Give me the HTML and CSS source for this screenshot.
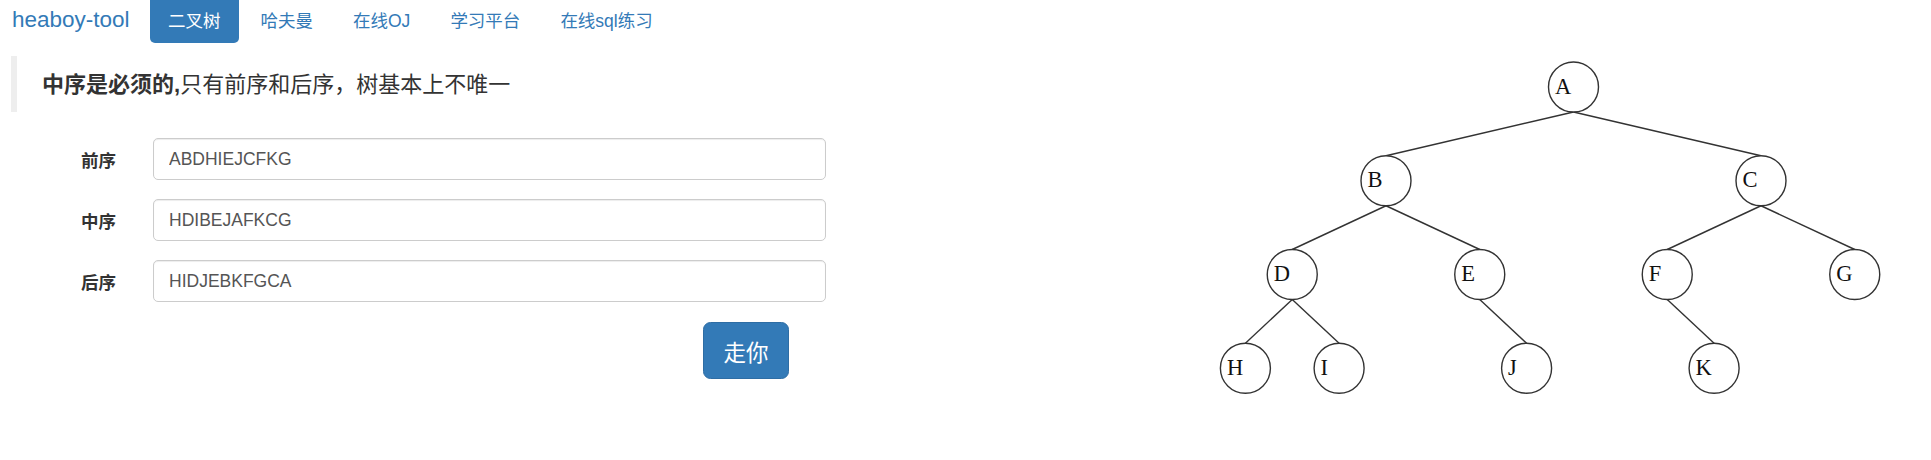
FILE: index.html
```html
<!DOCTYPE html>
<html lang="zh-CN">
<head>
<meta charset="utf-8">
<title>heaboy-tool</title>
<link rel="stylesheet" href="styles.css">
</head>
<body>
<nav class="navbar">
  <a class="brand" href="#">heaboy-tool</a>
  <ul class="pills">
    <li class="pill active"><a href="#">二叉树</a></li>
    <li class="pill"><a href="#">哈夫曼</a></li>
    <li class="pill"><a href="#">在线OJ</a></li>
    <li class="pill"><a href="#">学习平台</a></li>
    <li class="pill"><a href="#">在线sql练习</a></li>
  </ul>
</nav>
<main class="content">
  <section class="left">
    <blockquote class="note"><strong>中序是必须的,</strong>只有前序和后序，树基本上不唯一</blockquote>
    <form class="form">
      <div class="row"><label class="label">前序</label><input class="input" type="text" value="ABDHIEJCFKG"></div>
      <div class="row"><label class="label">中序</label><input class="input" type="text" value="HDIBEJAFKCG"></div>
      <div class="row"><label class="label">后序</label><input class="input" type="text" value="HIDJEBKFGCA"></div>
      <div class="actions"><button class="btn" type="button">走你</button></div>
    </form>
  </section>
  <section class="right">
    <svg class="tree" width="966" height="417" viewBox="965 43 966 417" xmlns="http://www.w3.org/2000/svg">
      <g class="edges">
        <line x1="1573.5" y1="112" x2="1386" y2="155.75"/>
        <line x1="1573.5" y1="112" x2="1761" y2="155.75"/>
        <line x1="1386" y1="205.75" x2="1292.25" y2="249.5"/>
        <line x1="1386" y1="205.75" x2="1479.75" y2="249.5"/>
        <line x1="1761" y1="205.75" x2="1667.25" y2="249.5"/>
        <line x1="1761" y1="205.75" x2="1854.75" y2="249.5"/>
        <line x1="1292.25" y1="299.5" x2="1245.4" y2="343.25"/>
        <line x1="1292.25" y1="299.5" x2="1339.1" y2="343.25"/>
        <line x1="1479.75" y1="299.5" x2="1526.6" y2="343.25"/>
        <line x1="1667.25" y1="299.5" x2="1714.1" y2="343.25"/>
      </g>
      <g class="nodes">
        <circle cx="1573.5" cy="87" r="25"/>
        <circle cx="1386" cy="180.75" r="25"/>
        <circle cx="1761" cy="180.75" r="25"/>
        <circle cx="1292.25" cy="274.5" r="25"/>
        <circle cx="1479.75" cy="274.5" r="25"/>
        <circle cx="1667.25" cy="274.5" r="25"/>
        <circle cx="1854.75" cy="274.5" r="25"/>
        <circle cx="1245.4" cy="368.25" r="25"/>
        <circle cx="1339.1" cy="368.25" r="25"/>
        <circle cx="1526.6" cy="368.25" r="25"/>
        <circle cx="1714.1" cy="368.25" r="25"/>
      </g>
      <g class="labels">
        <text x="1555" y="93.5">A</text>
        <text x="1367.5" y="187.25">B</text>
        <text x="1742.5" y="187.25">C</text>
        <text x="1273.75" y="281">D</text>
        <text x="1461.25" y="281">E</text>
        <text x="1648.75" y="281">F</text>
        <text x="1836.25" y="281">G</text>
        <text x="1226.9" y="374.75">H</text>
        <text x="1320.6" y="374.75">I</text>
        <text x="1508.1" y="374.75">J</text>
        <text x="1695.6" y="374.75">K</text>
      </g>
    </svg>
  </section>
</main>
</body>
</html>
```
FILE: styles.css
```css
html, body {
  margin: 0;
  padding: 0;
  background: #fff;
}
body {
  font-family: "Liberation Sans", "Noto Sans CJK SC", sans-serif;
  color: #333;
  font-size: 17.5px;
}
.navbar {
  display: flex;
  align-items: stretch;
  height: 43px;
}
.brand {
  box-sizing: border-box;
  width: 150px;
  padding: 0 0 0 12px;
  display: flex;
  align-items: center;
  padding-bottom: 3px;
  font-size: 22.5px;
  color: #337ab7;
  text-decoration: none;
}
.pills {
  display: flex;
  gap: 4px;
  list-style: none;
  margin: 0;
  padding: 0;
}
.pill a {
  display: flex;
  align-items: center;
  height: 43px;
  box-sizing: border-box;
  padding: 0 18px 4px;
  color: #337ab7;
  text-decoration: none;
  font-size: 17.5px;
}
.pill.active a {
  background: #337ab7;
  color: #fff;
  border-radius: 0 0 5px 5px;
}
.content {
  display: flex;
}
.left {
  width: 965px;
  flex: none;
}
.right {
  flex: 1;
}
.tree {
  display: block;
}
.note {
  margin: 13px 0 26px 11px;
  border-left: 6px solid #eee;
  padding: 12.5px 25px;
  font-size: 22px;
  line-height: 31px;
  color: #333;
}
.note strong {
  font-weight: bold;
}
.form {
  margin: 0;
}
.row {
  display: flex;
  align-items: center;
  margin-bottom: 19px;
}
.label {
  width: 116px;
  margin-right: 37px;
  text-align: right;
  font-weight: bold;
  font-size: 17.5px;
  color: #333;
}
.input {
  box-sizing: border-box;
  width: 673px;
  height: 42px;
  margin: 0;
  padding: 0 15px;
  border: 1px solid #ccc;
  border-radius: 5px;
  box-shadow: inset 0 1px 1px rgba(0, 0, 0, .075);
  font-family: "Liberation Sans", "Noto Sans CJK SC", sans-serif;
  font-size: 17.5px;
  color: #555;
  background: #fff;
}
.actions {
  display: flex;
  width: 789px;
  justify-content: flex-end;
  padding-top: 1px;
}
.btn {
  box-sizing: border-box;
  width: 86px;
  height: 57px;
  padding: 0;
  border: 1px solid #2e6da4;
  border-radius: 7.5px;
  background: #337ab7;
  color: #fff;
  font-family: "Liberation Sans", "Noto Sans CJK SC", sans-serif;
  font-size: 22.5px;
}
.edges line {
  stroke: #333;
  stroke-width: 1.4;
}
.nodes circle {
  fill: #fff;
  stroke: #333;
  stroke-width: 1.4;
}
.labels text {
  font-family: "Liberation Serif", serif;
  font-size: 22.5px;
  fill: #111;
}
```
